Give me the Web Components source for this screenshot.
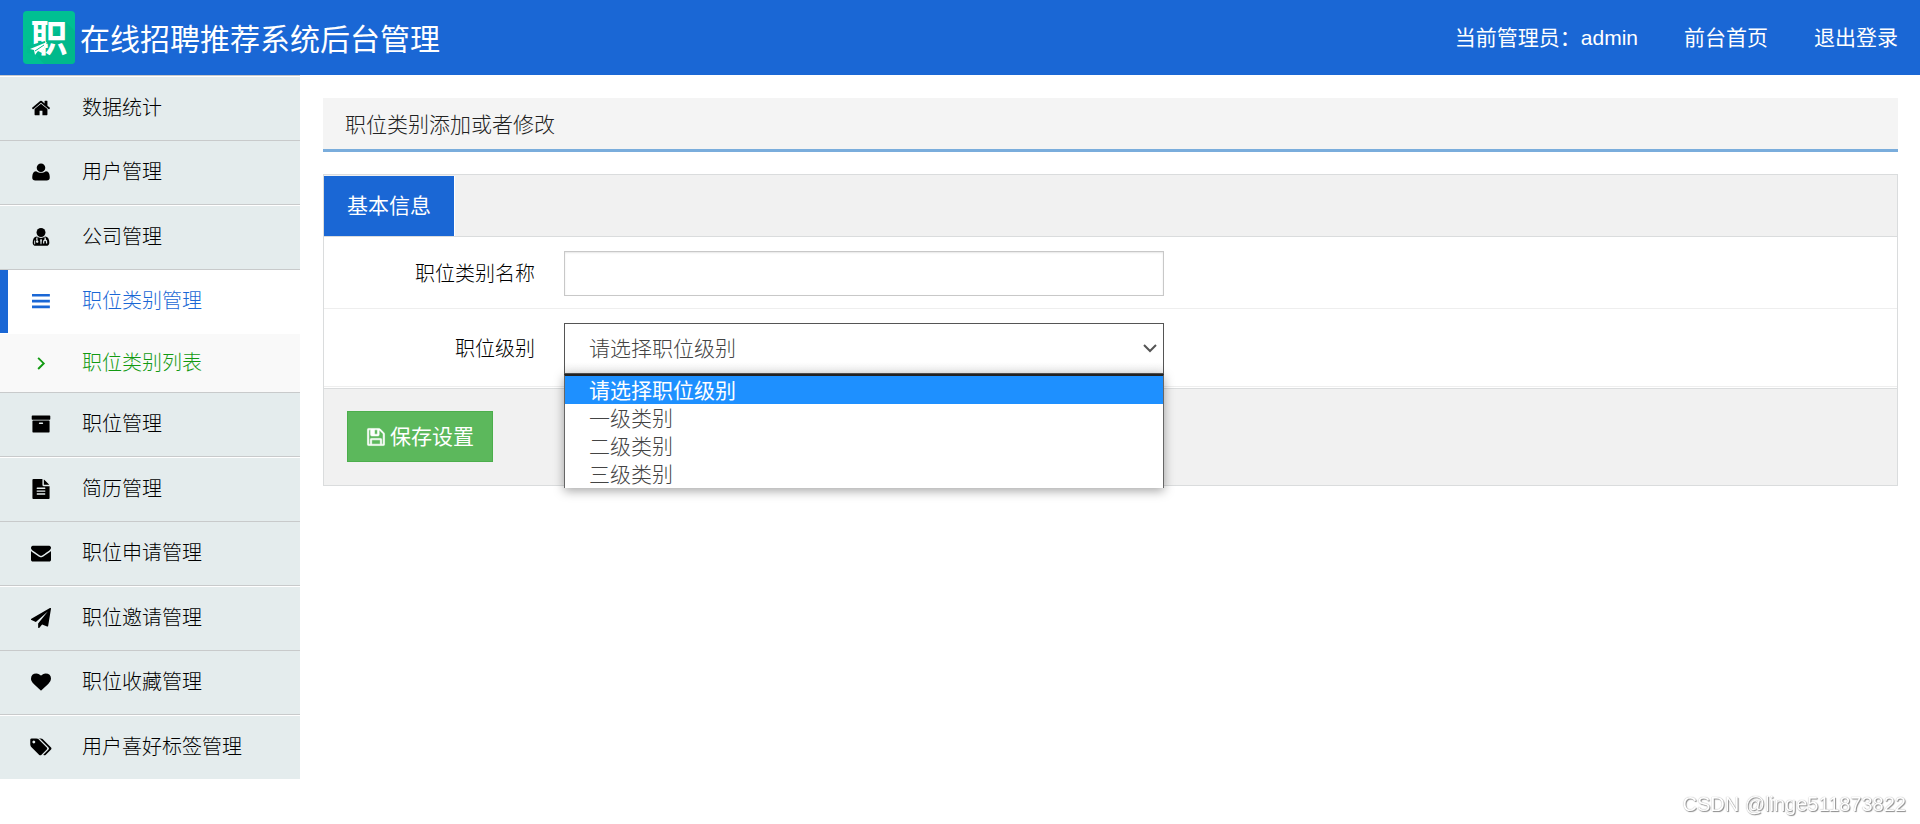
<!DOCTYPE html>
<html lang="zh-CN">
<head>
<meta charset="utf-8">
<meta name="viewport" content="width=device-width, initial-scale=1">
<title>在线招聘推荐系统后台管理</title>
<style>
body { margin: 0; background: #fff; color: #000; font: 300 21px/30px "Liberation Sans", "Noto Sans CJK SC", sans-serif; }
</style>
</head>
<body>
<admin-app></admin-app>
<script>
const define = (name, html, setup) => {
  const template = document.createElement('template');
  template.innerHTML = '<style>*{box-sizing:border-box}</style>' + html;
  customElements.define(name, class extends HTMLElement {
    constructor() {
      super();
      this.attachShadow({ mode: 'open' }).append(template.content.cloneNode(true));
    }
    connectedCallback() { if (setup) setup(this, this.shadowRoot); }
  });
};

const ICONS = {
  home: '<path d="M1472 992v480q0 26-19 45t-45 19h-384v-384h-256v384h-384q-26 0-45-19t-19-45v-480q0-1 .5-3t.5-3l575-474 575 474q1 2 1 6zm223-69l-62 74q-8 9-21 11h-3q-13 0-21-7l-692-577-692 577q-12 8-24 7-13-2-21-11l-62-74q-8-10-7-23.5t11-21.5l719-599q32-26 76-26t76 26l244 204v-195q0-14 9-23t23-9h192q14 0 23 9t9 23v408l219 182q10 8 11 21.5t-7 23.5z"/>',
  user: '<path d="M1680 1405q0 120-73 189.500t-194 69.500h-1034q-121 0-194-69.500t-73-189.500q0-53 3.500-103.500t14-109 26.500-108.500 43-97.500 62-81 85.500-53.500 111.500-20q9 0 42 21.500t74.500 48 108 48 213.500 21.500 213.500-21.500 108-48 74.500-48 42-21.500q61 0 111.500 20t85.500 53.500 62 81 43 97.500 26.500 108.500 14 109 3.500 103.500zm-400-893q0 159-112.500 271.500t-271.500 112.500-271.500-112.500-112.500-271.500 112.500-271.500 271.500-112.500 271.500 112.500 112.500 271.500z"/>',
  doctor: '<circle cx="896" cy="490" r="400"/><path fill-rule="evenodd" d="M520 850Q150 900 150 1400Q150 1680 440 1680H1352Q1642 1680 1642 1400Q1642 900 1272 850Q1100 980 896 980T520 850zM470 960L580 920V1190L660 1270V1370L560 1440L450 1370V1260L520 1190L470 1110zM1210 920L1330 970V1120Q1450 1170 1450 1290V1480H1340V1300L1260 1230L1190 1300V1480H1080V1290Q1080 1160 1210 1120zM290 1200H370V1550H290zM820 1140L900 1070L980 1140L930 1540H860z"/>',
  bars: '<path d="M90 270h1600v230H90zM90 790h1600v230H90zM90 1310h1600v230H90z"/>',
  angle: '<path d="M640 430L1140 930L640 1430" fill="none" stroke="currentColor" stroke-width="170"/>',
  archive: '<path d="M1088 832q0-26-19-45t-45-19h-256q-26 0-45 19t-19 45 19 45 45 19h256q26 0 45-19t19-45zm576-192v960q0 26-19 45t-45 19h-1408q-26 0-45-19t-19-45v-960q0-26 19-45t45-19h1408q26 0 45 19t19 45zm64-448v256q0 26-19 45t-45 19h-1536q-26 0-45-19t-19-45v-256q0-26 19-45t45-19h1536q26 0 45 19t19 45z"/>',
  file: '<path d="M1596 476q14 14 28 36h-472v-472q22 14 36 28zm-476 164h544v1056q0 40-28 68t-68 28h-1344q-40 0-68-28t-28-68v-1600q0-40 28-68t68-28h800v544q0 40 28 68t68 28zm160 736v-64q0-14-9-23t-23-9h-704q-14 0-23 9t-9 23v64q0 14 9 23t23 9h704q14 0 23-9t9-23zm0-256v-64q0-14-9-23t-23-9h-704q-14 0-23 9t-9 23v64q0 14 9 23t23 9h704q14 0 23-9t9-23zm0-256v-64q0-14-9-23t-23-9h-704q-14 0-23 9t-9 23v64q0 14 9 23t23 9h704q14 0 23-9t9-23z"/>',
  mail: '<path d="M1792 710v794q0 66-47 113t-113 47h-1472q-66 0-113-47t-47-113v-794q44 49 101 87 362 246 497 345 57 42 92.500 65.500t94.500 48 110 24.500h2q51 0 110-24.500t94.500-48 92.500-65.500q170-123 498-345 57-39 100-87zm0-294q0 79-49 151t-122 123q-376 261-468 325-10 7-42.500 31t-54 38.500-52 32.500-57.500 27-50 9h-2q-23 0-50-9t-57.500-27-52-32.500-54-38.500-42.500-31q-91-64-262-182.500t-205-142.500q-62-42-117-115.500t-55-136.500q0-78 41.500-130t118.500-52h1472q65 0 112.500 47t47.500 113z"/>',
  plane: '<path d="M1764 11q33 24 27 64l-256 1536q-5 29-32 45-14 8-31 8-11 0-24-5l-453-185-242 295q-18 23-49 23-13 0-22-4-19-7-30.500-23.500t-11.500-36.500v-349l864-1059-1069 925-395-162q-37-14-40-55-2-40 32-59l1664-960q15-9 32-9 20 0 36 11z"/>',
  heart: '<path d="M896 1664q-26 0-44-18l-624-602q-10-8-27.500-26t-55.500-65.500-68-97.500-53.500-121-23.500-138q0-220 127-344t351-124q62 0 126.500 21.500t120 58 95.500 68.500 76 68q36-36 76-68t95.500-68.500 120-58 126.500-21.500q224 0 351 124t127 344q0 221-229 450l-623 600q-18 18-44 18z"/>',
  tags: '<path transform="translate(-130 0)" d="M512 448q0-53-37.500-90.500t-90.500-37.500-90.500 37.500-37.500 90.500 37.500 90.500 90.500 37.500 90.500-37.500 37.500-90.500zm1067 576q0 53-37 90l-491 492q-39 37-91 37-53 0-90-37l-715-716q-38-37-64.500-101t-26.500-117v-416q0-52 38-90t90-38h416q53 0 117 26.500t102 64.500l715 714q37 39 37 91zm384 0q0 53-37 90l-491 492q-39 37-91 37-36 0-59-14t-53-45l470-470q37-37 37-90 0-52-37-91l-715-714q-38-38-102-64.500t-117-26.500h224q53 0 117 26.500t102 64.500l715 714q37 39 37 91z"/>',
  save: '<path fill-rule="evenodd" stroke="currentColor" stroke-width="50" d="M512 1536h768v-384H512zM1408 1536h128V640q0-20-12-42l-282-282q-22-20-62-28v416q0 96-96 96H508q-96 0-96-96V256H256v1280h128v-416q0-96 96-96h832q96 0 96 96zM1024 608V288q0-32-32-32H800q-32 0-32 32v320q0 32 32 32h192q32 0 32-32zM1664 640v928q0 96-96 96H224q-96 0-96-96V224q0-96 96-96h928q80 0 136 56l320 320q56 56 56 136z"/>'
};

define('ui-icon', `
<style>
:host { display: inline-flex; width: 20px; height: 20px; flex: none; }
svg { display: block; width: 100%; height: 100%; fill: currentColor; overflow: visible; }
</style><svg viewBox="0 0 1792 1792" aria-hidden="true"></svg>`,
(host, root) => { root.querySelector('svg').innerHTML = ICONS[host.getAttribute('name')]; });

define('brand-mark', `
<style>
:host { position: relative; display: grid; justify-items: center; width: 52px; height: 53px; flex: none; border-radius: 4px;
  background: #00c092; color: #fff; font: 700 37px/51px "Noto Sans CJK SC", sans-serif; }
svg { position: absolute; inset: 0; width: 100%; height: 100%; border-radius: 4px; }
span { position: relative; }
</style>
<svg viewBox="0 0 52 53" aria-hidden="true"><path fill="#00b98b" d="M43 11L52 20V53H21L8 39L22 33z"/></svg>
<span>职</span>
<svg viewBox="0 0 52 53" aria-hidden="true"><path fill="#00bd8f" d="M4 35L22 30V35L17 45L4 42z"/><path fill="#fff" d="M7 38L24 31L19 42L15 40L12 44L11 39z"/><path fill="none" stroke="#00bd8f" d="M12 40L21 34"/></svg>`);

define('app-header', `
<style>
:host { display: flex; align-items: center; justify-content: space-between; height: 75px; padding: 0 22px 0 23px; background: #1a67d5; color: #fff; font-weight: 400; }
.brand { display: flex; align-items: center; gap: 5px; }
h1 { margin: 0; font-size: 30px; line-height: 44px; font-weight: 400; padding-top: 4px; }
nav { display: flex; gap: 46px; }
a { color: inherit; text-decoration: none; }
</style>
<div class="brand"><brand-mark></brand-mark><h1>在线招聘推荐系统后台管理</h1></div>
<nav><span>当前管理员：admin</span><a href="#home">前台首页</a><a href="#logout">退出登录</a></nav>`);

define('menu-item', `
<style>
:host { display: block; border-top: 1px solid #c8cacb; background: #e4eced; color: #000; }
:host([edge]) { box-shadow: inset 0 1px #fff; padding-top: 1px; }
:host([active]) { background: #fff; color: #1a67d5; border-bottom: 1px solid #fff; }
:host([sub]) { background: #f9f9f9; color: #129a12; border: 0; }
a { display: flex; align-items: center; gap: 31px; height: 63px; padding: 0 0 1px 31px; color: inherit; text-decoration: none; font-size: 20px; }
:host([active]) a { border-left: 8px solid #1a67d5; padding-left: 23px; }
:host([sub]) a { height: 58px; padding-bottom: 0; }
</style>
<a href="#menu"><ui-icon></ui-icon><slot></slot></a>`,
(host, root) => {
  const icon = document.createElement('ui-icon');
  icon.setAttribute('name', host.getAttribute('icon'));
  root.querySelector('ui-icon').replaceWith(icon);
});

define('side-menu', `
<style>:host { display: block; width: 300px; flex: none; } nav { display: block; }</style>
<nav>
<menu-item icon="home" edge>数据统计</menu-item>
<menu-item icon="user">用户管理</menu-item>
<menu-item icon="doctor" edge>公司管理</menu-item>
<menu-item icon="bars" active>职位类别管理</menu-item>
<menu-item icon="angle" sub>职位类别列表</menu-item>
<menu-item icon="archive">职位管理</menu-item>
<menu-item icon="file" edge>简历管理</menu-item>
<menu-item icon="mail">职位申请管理</menu-item>
<menu-item icon="plane" edge>职位邀请管理</menu-item>
<menu-item icon="heart">职位收藏管理</menu-item>
<menu-item icon="tags" edge>用户喜好标签管理</menu-item>
</nav>`);

define('page-title', `
<style>
:host { display: block; background: #f4f4f4; border-bottom: 3px solid #7aaddc; color: #222; }
h2 { margin: 0; padding: 12px 22px 9px; font: inherit; }
</style><h2><slot></slot></h2>`);

define('level-select', `
<style>
:host { position: relative; display: block; }
select { display: block; width: 100%; height: 51px; margin: 0; padding: 0 24px; border: 1px solid #555; border-radius: 0; background: #fff linear-gradient(#fff 38px, #eee); color: #444; font: inherit; appearance: none; outline: 0; }
.arrow { position: absolute; right: 6px; top: 19px; width: 16px; height: 12px; fill: none; stroke: #555; stroke-width: 2; pointer-events: none; }
ul { position: absolute; z-index: 2; left: 0; right: 0; top: 100%; margin: 0; padding: 0; list-style: none; background: #fff; color: #444;
  border: 1px solid #666; border-width: 2px 1px 0; border-top-color: #222; box-shadow: 0 3px 10px rgba(0,0,0,.35); }
li { height: 28px; line-height: 30px; padding-left: 24px; }
li[aria-selected=true] { background: #1e90ff; color: #fff; font-weight: 400; }
</style>
<select aria-label="职位级别"><option>请选择职位级别</option><option>一级类别</option><option>二级类别</option><option>三级类别</option></select>
<svg class="arrow" viewBox="0 0 16 12" aria-hidden="true"><path d="M2 3L8 9L14 3"/></svg>
<ul role="listbox" aria-label="职位级别">
<li role="option" aria-selected="true">请选择职位级别</li><li role="option">一级类别</li><li role="option">二级类别</li><li role="option">三级类别</li>
</ul>`);

define('category-form', `
<style>
:host { display: block; border: 1px solid #dadcdd; }
form { margin: 0; }
.tabs { display: flex; height: 62px; padding-top: 1px; background: #f1f1f1; border-bottom: 1px solid #dadcdd; }
.tabs button { margin: 0; padding: 0 23px; border: 0; border-right: 1px solid #fff; background: #1a67d5; color: #fff; font: inherit; font-weight: 400; }
.row { display: grid; grid-template-columns: 211px minmax(0, 600px); column-gap: 29px; align-items: center; padding: 14px 0 12px; border-bottom: 1px solid #eee; }
label { text-align: right; font-size: 20px; }
input { display: block; width: 100%; height: 45px; margin: 0; padding: 0 24px; border: 1px solid #c8c8c8; border-radius: 0; background: #fff; font: inherit; box-shadow: inset 0 1px 2px rgba(0,0,0,.1); outline: 0; }
.actions { margin-top: 1px; padding: 22px 23px 23px; background: #f1f1f1; border-top: 1px solid #dadcdd; }
.save { display: flex; align-items: center; gap: 4px; height: 51px; margin: 0; padding: 0 18px; border: 1px solid #4cae4c; background: #5cb85c; color: #fff; font: inherit; font-weight: 400; }
</style>
<form>
<div class="tabs"><button type="button">基本信息</button></div>
<div class="row"><label for="name">职位类别名称</label><input id="name" type="text"></div>
<div class="row"><label id="level-label">职位级别</label><level-select></level-select></div>
<div class="actions"><button class="save" type="button"><ui-icon name="save"></ui-icon>保存设置</button></div>
</form>`,
(host, root) => {
  root.querySelector('#level-label').addEventListener('click', () =>
    root.querySelector('level-select').shadowRoot.querySelector('select').focus());
});

define('water-mark', `
<style>
:host { position: fixed; right: 14px; bottom: 5px; color: #fff; font: 300 20px/30px "Liberation Sans", sans-serif; text-shadow: 0 0 1px #999, 1px 1px 1px #888; }
</style><slot></slot>`);

define('admin-app', `
<style>
:host { display: block; }
.body { display: flex; align-items: flex-start; }
main { flex: 1; min-width: 0; display: grid; gap: 22px; padding: 23px 22px 23px 23px; }
</style>
<app-header></app-header>
<div class="body">
<side-menu></side-menu>
<main><page-title>职位类别添加或者修改</page-title><category-form></category-form></main>
</div>
<water-mark>CSDN @linge511873822</water-mark>`);
</script>
</body>
</html>
